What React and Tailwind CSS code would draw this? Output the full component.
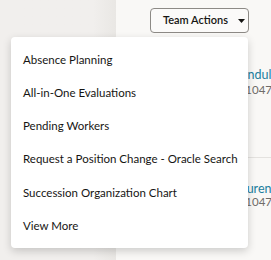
import React from 'react';

const actions = [
  'Absence Planning',
  'All-in-One Evaluations',
  'Pending Workers',
  'Request a Position Change - Oracle Search',
  'Succession Organization Chart',
  'View More',
];

export default function App() {
  return (
    <div
      className="relative flex h-[260px] w-[271px] overflow-hidden text-[#161513]"
      style={{ fontFamily: 'Lato, "Noto Sans", sans-serif' }}
    >
      {/* left panel */}
      <div className="w-[116px] shrink-0 bg-gradient-to-r from-[#f1efed] from-80% to-[#e9e7e4]" />

      {/* right panel */}
      <div className="flex min-w-0 flex-1 flex-col overflow-hidden bg-[#f9f8f6] whitespace-nowrap">
        <div className="flex justify-end pr-[22px] pt-[8px]">
          <button className="flex h-[25px] w-[99px] shrink-0 items-center rounded-[4px] border border-[#8d8a86] bg-[#fbfaf9] pl-[12px] text-[11px] font-semibold">
            Team Actions
            <svg width="7" height="4" viewBox="0 0 7 4" className="ml-[10px]">
              <path d="M0 0h7L3.5 4z" fill="#161513" />
            </svg>
          </button>
        </div>

        <div className="flex flex-col pl-[117px] pt-[34px]">
          <span className="text-[12.5px] leading-[15px] text-[#227e9e]">Kandula</span>
          <span className="-ml-[1px] text-[11.5px] leading-[15px] text-[#6f6c69]">921047</span>
        </div>
        <div className="mt-[60px] h-px bg-[#e4e2df]" />
        <div className="flex flex-col pl-[118px] pt-[24px]">
          <span className="text-[12.5px] leading-[13px] text-[#227e9e]">Laurent</span>
          <span className="-ml-[2px] text-[11.5px] leading-[13px] text-[#6f6c69]">921047</span>
        </div>
      </div>

      {/* dropdown menu */}
      <div className="absolute left-[11px] top-[37px] flex h-[211px] w-[237px] flex-col rounded-[4px] bg-white py-[6px] shadow-[0_3px_8px_rgba(0,0,0,0.18)]">
        {actions.map((a) => (
          <div key={a} className="flex h-[33.3px] items-center px-[12px] text-[11.5px] whitespace-nowrap">
            {a}
          </div>
        ))}
      </div>
    </div>
  );
}
